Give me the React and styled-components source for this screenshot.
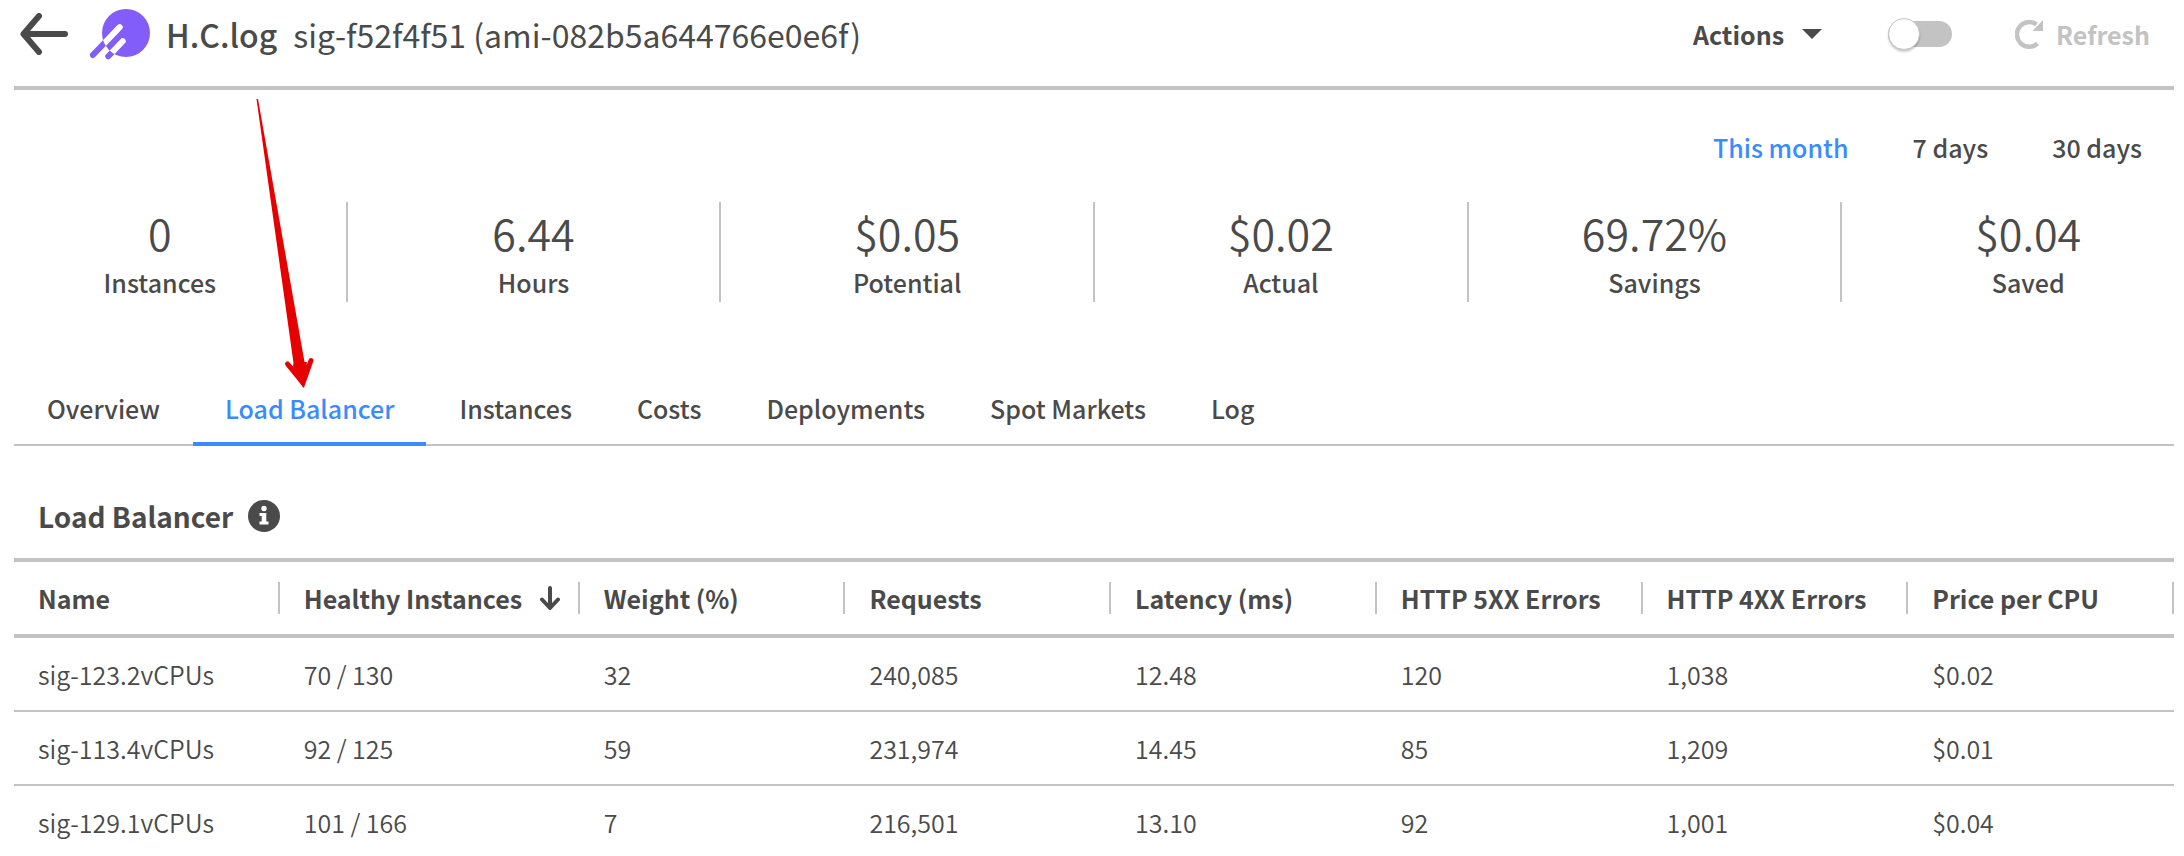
import React, { useState } from "react";
import styled, { createGlobalStyle } from "styled-components";

const color = {
  text: "#4a4a4a",
  line: "#c3c3c3",
  blue: "#3a8bfd",
  purple: "#835dfa",
};

const GlobalStyle = createGlobalStyle`
  *, *::before, *::after { box-sizing: border-box; }
  body {
    margin: 0;
    background: #fff;
    color: ${color.text};
    font-family: "Noto Sans CJK SC", "Noto Sans", sans-serif;
    font-size: 25px;
    line-height: 36px;
  }
  button {
    margin: 0;
    padding: 0;
    border: 0;
    background: none;
    color: inherit;
    font: inherit;
    cursor: pointer;
  }
`;

const Page = styled.div`
  position: relative;
  padding: 0 10px 0 14px;
`;

const Header = styled.header`
  display: flex;
  align-items: center;
  justify-content: space-between;
  height: 90px;
  padding: 0 24px 18px 6px;
  border-bottom: 4px solid ${color.line};
`;

const HeaderGroup = styled.div`
  display: flex;
  align-items: center;
`;

const BackButton = styled.button`
  display: flex;
  margin-right: 22px;
`;

const Title = styled.h1`
  display: flex;
  gap: 16px;
  margin: 0 0 0 16px;
  font-size: 32px;
  line-height: 40px;
  font-weight: 400;

  strong { font-weight: 500; }
`;

const ActionButton = styled.button`
  display: flex;
  align-items: center;
  gap: ${(p) => p.$gap}px;
  line-height: 34px;
  font-weight: 700;
  color: ${(p) => (p.disabled ? color.line : color.text)};
`;

const Toggle = styled.input`
  appearance: none;
  display: flex;
  align-items: center;
  width: 64px;
  height: 26px;
  margin: 0 63px 0 66px;
  border-radius: 13px;
  background: ${(p) => (p.checked ? color.blue : color.line)};
  cursor: pointer;

  &::before {
    content: "";
    flex: none;
    width: 32px;
    height: 32px;
    margin-left: ${(p) => (p.checked ? "32px" : "0")};
    border: 1px solid ${color.line};
    border-radius: 50%;
    background: #fff;
    box-shadow: 0 2px 2px rgba(0, 0, 0, 0.2);
  }
`;

const Ranges = styled.div`
  display: flex;
  justify-content: flex-end;
  margin-top: 39px;
`;

const RangeButton = styled.button`
  padding: 0 32px;
  font-weight: 500;
  color: ${(p) => (p.$active ? color.blue : color.text)};
`;

const Stats = styled.section`
  display: flex;
  margin-top: 37px;
`;

const Stat = styled.div`
  flex: 1 1 0;
  min-width: 0;
  height: 100px;
  padding-top: 6px;
  text-align: center;
`;

const StatDivider = styled.div`
  width: 2px;
  margin: 0 40px;
  background: ${color.line};
`;

const StatValue = styled.div`
  font-size: 43px;
  line-height: 48px;
  font-weight: 350;
`;

const StatLabel = styled.div`
  margin-top: 8px;
  font-weight: 500;
`;

const Tabs = styled.div`
  display: flex;
  gap: 1px;
  margin-top: 70px;
  padding-left: 1px;
  border-bottom: 2px solid ${color.line};
`;

const Tab = styled.button`
  margin-bottom: -2px;
  padding: 18px 32px 16px;
  border-bottom: 4px solid ${(p) => (p.$active ? color.blue : "transparent")};
  font-weight: 500;
  color: ${(p) => (p.$active ? color.blue : color.text)};
`;

const PanelTitle = styled.h2`
  display: flex;
  align-items: center;
  gap: 15px;
  margin: 0;
  padding: 52px 24px 24px;
  font-size: 28px;
  font-weight: 700;
`;

const Table = styled.table`
  width: 100%;
  table-layout: fixed;
  border-spacing: 0;
  text-align: left;
`;

const Column = styled.col`
  width: ${(p) => (p.$wide ? "300px" : "auto")};
`;

const HeadCell = styled.th`
  padding: 20px 0;
  border-top: 4px solid ${color.line};
  border-bottom: 4px solid ${color.line};
  font-weight: 700;
`;

const HeadLabel = styled.div`
  display: flex;
  align-items: center;
  height: 32px;
  padding-left: 24px;
  border-right: 2px solid ${color.line};
  white-space: nowrap;
`;

const SortButton = styled.button`
  display: flex;
  align-items: center;
  gap: 18px;
`;

const Cell = styled.td`
  padding: 18px 24px;
  border-bottom: 2px solid ${color.line};
  font-weight: 350;

  tr:last-child > & {
    padding-bottom: 16px;
    border-bottom: 0;
  }
`;

const PointerArrow = styled.svg`
  position: absolute;
  left: 250px;
  top: 96px;
  pointer-events: none;
`;

const BackIcon = () => (
  <svg width="48" height="42" viewBox="0 0 48 42" fill="none" stroke={color.text} strokeWidth="6" strokeLinecap="round" strokeLinejoin="round">
    <path d="M45 21H4M19 3L3.500 21L19 39" />
  </svg>
);

const Logo = () => (
  <svg width="60" height="52" viewBox="0 0 60 52" fill="none" strokeLinecap="round">
    <clipPath id="planet">
      <circle cx="36" cy="25" r="24" />
    </clipPath>
    <path d="M29.700 19.200L2.900 47M32.700 33.200L18.300 48.300" stroke={color.purple} strokeWidth="6" />
    <circle cx="36" cy="25" r="24" fill={color.purple} />
    <path d="M29.700 19.200L2.900 47M32.700 33.200L18.300 48.300" stroke="#fff" strokeWidth="6" clipPath="url(#planet)" />
  </svg>
);

const CaretIcon = () => (
  <svg width="20" height="10" viewBox="0 0 20 10">
    <path d="M0 0H20L10 10Z" fill={color.text} />
  </svg>
);

const RefreshIcon = () => (
  <svg width="28" height="30" viewBox="0 0 28 30">
    <path d="M22.500 24.500A12.300 12.300 0 1 1 21.500 5.500" fill="none" stroke={color.line} strokeWidth="4.500" />
    <path d="M28 1V12H17.500Z" fill={color.line} />
  </svg>
);

const InfoIcon = () => (
  <svg width="32" height="32" viewBox="0 0 32 32">
    <circle cx="16" cy="16" r="16" fill={color.text} />
    <circle cx="16" cy="8.500" r="2.700" fill="#fff" />
    <path d="M11.500 13H18.300V21.500H20.500V24.500H11.500V21.500H13.700V16H11.500Z" fill="#fff" />
  </svg>
);

const SortIcon = () => (
  <svg width="20" height="24" viewBox="0 0 20 24" fill="none" stroke={color.text} strokeWidth="4" strokeLinecap="round" strokeLinejoin="round">
    <path d="M10 2V21M2 13.500L10 22L18 13.500" />
  </svg>
);

const stats = [
  ["0", "Instances"],
  ["6.44", "Hours"],
  ["$0.05", "Potential"],
  ["$0.02", "Actual"],
  ["69.72%", "Savings"],
  ["$0.04", "Saved"],
];

const ranges = ["This month", "7 days", "30 days"];

const tabs = ["Overview", "Load Balancer", "Instances", "Costs", "Deployments", "Spot Markets", "Log"];

const columns = [
  "Name",
  "Healthy Instances",
  "Weight (%)",
  "Requests",
  "Latency (ms)",
  "HTTP 5XX Errors",
  "HTTP 4XX Errors",
  "Price per CPU",
];

const rows = [
  ["sig-123.2vCPUs", "70 / 130", "32", "240,085", "12.48", "120", "1,038", "$0.02"],
  ["sig-113.4vCPUs", "92 / 125", "59", "231,974", "14.45", "85", "1,209", "$0.01"],
  ["sig-129.1vCPUs", "101 / 166", "7", "216,501", "13.10", "92", "1,001", "$0.04"],
];

export default function App() {
  const [enabled, setEnabled] = useState(false);
  const [range, setRange] = useState(ranges[0]);
  const [tab, setTab] = useState("Load Balancer");

  return (
    <>
      <GlobalStyle />
      <Page>
        <Header>
          <HeaderGroup>
            <BackButton aria-label="Back">
              <BackIcon />
            </BackButton>
            <Logo />
            <Title>
              <strong>H.C.log</strong>
              <span>sig-f52f4f51 (ami-082b5a644766e0e6f)</span>
            </Title>
          </HeaderGroup>
          <HeaderGroup>
            <ActionButton $gap={18}>
              Actions
              <CaretIcon />
            </ActionButton>
            <Toggle
              type="checkbox"
              role="switch"
              aria-label="Enabled"
              checked={enabled}
              onChange={(e) => setEnabled(e.target.checked)}
            />
            <ActionButton $gap={13} disabled>
              <RefreshIcon />
              Refresh
            </ActionButton>
          </HeaderGroup>
        </Header>

        <Ranges>
          {ranges.map((name) => (
            <RangeButton key={name} $active={name === range} onClick={() => setRange(name)}>
              {name}
            </RangeButton>
          ))}
        </Ranges>

        <Stats>
          {stats.map(([value, label], i) => (
            <React.Fragment key={label}>
              {i > 0 && <StatDivider />}
              <Stat>
                <StatValue>{value}</StatValue>
                <StatLabel>{label}</StatLabel>
              </Stat>
            </React.Fragment>
          ))}
        </Stats>

        <Tabs role="tablist">
          {tabs.map((name) => (
            <Tab key={name} role="tab" aria-selected={name === tab} $active={name === tab} onClick={() => setTab(name)}>
              {name}
            </Tab>
          ))}
        </Tabs>

        <PanelTitle>
          Load Balancer
          <InfoIcon />
        </PanelTitle>

        <Table>
          <colgroup>
            {columns.map((name) => (
              <Column key={name} $wide={name === "Healthy Instances"} />
            ))}
          </colgroup>
          <thead>
            <tr>
              {columns.map((name) => (
                <HeadCell key={name} scope="col">
                  <HeadLabel>
                    {name === "Healthy Instances" ? (
                      <SortButton>
                        {name}
                        <SortIcon />
                      </SortButton>
                    ) : (
                      name
                    )}
                  </HeadLabel>
                </HeadCell>
              ))}
            </tr>
          </thead>
          <tbody>
            {rows.map((row) => (
              <tr key={row[0]}>
                {row.map((value, i) => (
                  <Cell key={columns[i]}>{value}</Cell>
                ))}
              </tr>
            ))}
          </tbody>
        </Table>

        <PointerArrow width="70" height="296" viewBox="0 0 70 296" aria-hidden="true">
          <path d="M6.500 3L8 3L54.500 266L57 266L53 291L43 270L43.500 267Z" fill="#e60000" />
          <path d="M37.500 268L53 287L61 264.500" fill="none" stroke="#e60000" strokeWidth="5" strokeLinecap="round" />
          <path d="M39 267L44 271L55 270L60 266L53 291Z" fill="#e60000" />
        </PointerArrow>
      </Page>
    </>
  );
}
